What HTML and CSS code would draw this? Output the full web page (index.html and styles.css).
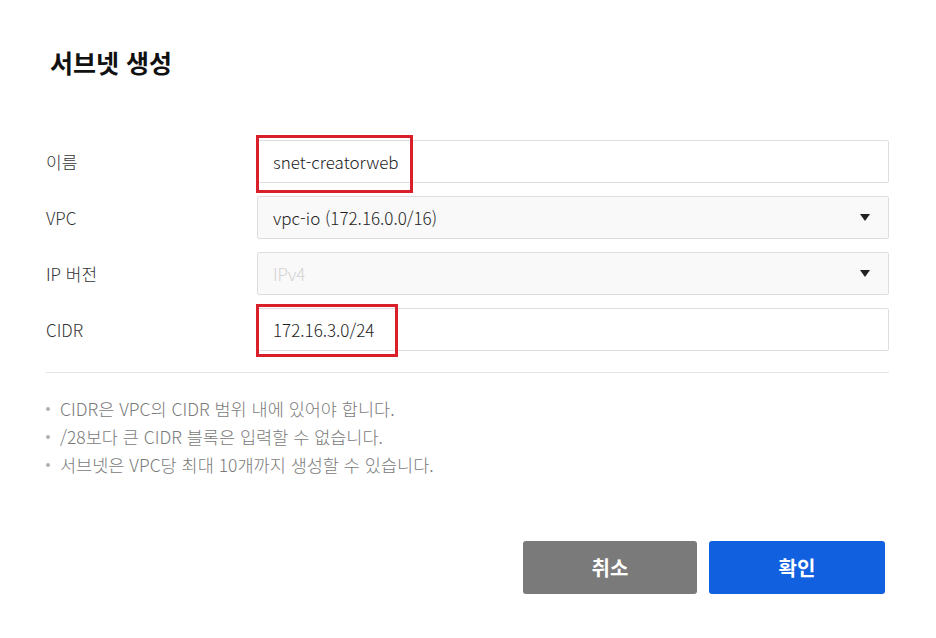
FILE: index.html
```html
<!DOCTYPE html>
<html lang="ko">
<head>
<meta charset="utf-8">
<title>서브넷 생성</title>
<link rel="stylesheet" href="styles.css">
</head>
<body>
<div class="dialog">
  <h1 class="title">서브넷 생성</h1>
  <div class="form">
    <div class="row">
      <label class="label">이름</label>
      <div class="field">
        <div class="input">snet-creatorweb</div>
        <div class="mark mark-name"></div>
      </div>
    </div>
    <div class="row">
      <label class="label">VPC</label>
      <div class="field">
        <div class="input select"><span>vpc-io (172.16.0.0/16)</span><span class="caret"></span></div>
      </div>
    </div>
    <div class="row">
      <label class="label">IP 버전</label>
      <div class="field">
        <div class="input select disabled"><span>IPv4</span><span class="caret"></span></div>
      </div>
    </div>
    <div class="row">
      <label class="label">CIDR</label>
      <div class="field">
        <div class="input">172.16.3.0/24</div>
        <div class="mark mark-cidr"></div>
      </div>
    </div>
  </div>
  <hr class="divider">
  <ul class="notes">
    <li>CIDR은 VPC의 CIDR 범위 내에 있어야 합니다.</li>
    <li>/28보다 큰 CIDR 블록은 입력할 수 없습니다.</li>
    <li>서브넷은 VPC당 최대 10개까지 생성할 수 있습니다.</li>
  </ul>
  <div class="actions">
    <button class="btn btn-cancel">취소</button>
    <button class="btn btn-ok">확인</button>
  </div>
</div>
</body>
</html>
```
FILE: styles.css
```css
* { box-sizing: border-box; }
html, body { margin: 0; padding: 0; background: #fff; }
body {
  font-family: "Noto Sans CJK KR", "Noto Sans", sans-serif;
  color: #222;
}
.dialog {
  width: 936px;
  height: 638px;
  padding: 45px 47px 0 46px;
  overflow: hidden;
}
.title {
  margin: 0 0 0 4px;
  font-size: 25px;
  line-height: 34px;
  font-weight: 700;
  color: #111;
}
.form {
  margin-top: 61px;
  display: flex;
  flex-direction: column;
  gap: 13px;
}
.row {
  display: flex;
  align-items: center;
  height: 43px;
}
.label {
  width: 211px;
  font-size: 17px;
  font-weight: 300;
  color: #333;
}
.field {
  position: relative;
  flex: 1;
  height: 43px;
}
.input {
  height: 43px;
  border: 1px solid #dedede;
  border-radius: 2px;
  padding: 0 16px 0 15px;
  display: flex;
  align-items: center;
  font-size: 17px;
  font-weight: 300;
  color: #222;
  background: #fff;
}
.select {
  justify-content: space-between;
  background: #f9f9f9;
}
.select.disabled span:first-child { color: #d2d2d2; }
.caret {
  width: 0;
  height: 0;
  border-left: 5px solid transparent;
  border-right: 5px solid transparent;
  border-top: 7px solid #222;
  margin-right: 2px;
}
.mark {
  position: absolute;
  border: 3px solid #d9202a;
}
.mark-name { left: -1px; top: -5px; width: 157px; height: 58px; }
.mark-cidr { left: -1px; top: -4px; width: 142px; height: 53px; }
.divider {
  margin: 21px 0 0 0;
  border: 0;
  border-top: 1px solid #e3e3e3;
  height: 0;
}
.notes {
  list-style: none;
  margin: 22px 0 0 0;
  padding: 0;
}
.notes li {
  position: relative;
  padding-left: 14px;
  font-size: 17.5px;
  font-weight: 300;
  line-height: 28px;
  color: #7a7a7a;
}
.notes li::before {
  content: "";
  position: absolute;
  left: 0;
  top: 12px;
  width: 4px;
  height: 4px;
  border-radius: 50%;
  background: #b0b0b0;
}
.actions {
  margin-top: 62px;
  display: flex;
  justify-content: flex-end;
  gap: 12px;
  padding-right: 4px;
}
.btn {
  height: 53px;
  border: 0;
  border-radius: 3px;
  font-family: inherit;
  font-size: 20px;
  font-weight: 700;
  color: #fff;
}
.btn-cancel { width: 174px; background: #7a7a7a; }
.btn-ok { width: 176px; background: #1160e0; }
```
